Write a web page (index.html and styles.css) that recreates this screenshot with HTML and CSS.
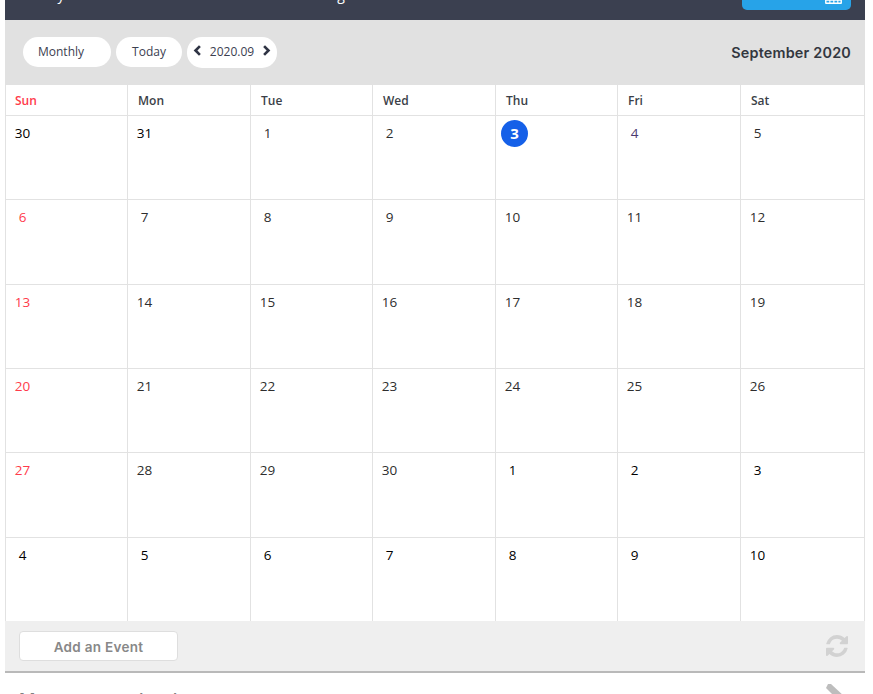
FILE: index.html
```
<!DOCTYPE html>
<html lang="en">
<head>
<meta charset="utf-8">
<title>Calendar</title>
<link rel="stylesheet" href="styles.css">
</head>
<body>
<div class="page">
  <header class="topbar">
    <span class="nav-a">Weekly</span>
    <span class="nav-b">Manage</span>
    <span class="cal-btn">
      <svg class="cal-icon" viewBox="0 0 18 16" aria-hidden="true"><path d="M1 0h16a1 1 0 0 1 1 1v14a1 1 0 0 1-1 1H1a1 1 0 0 1-1-1V1a1 1 0 0 1 1-1zm.5 5v2.500h3V5zm4.200 0v2.500h3V5zm4.300 0v2.500h3V5zm4.200 0v2.500h2.300V5zM1.500 8.800v2.500h3V8.800zm4.200 0v2.500h3V8.800zm4.300 0v2.500h3V8.800zm4.200 0v2.500h2.300V8.800zM1.500 12.500v2h3v-2zm4.200 0v2h3v-2zm4.300 0v2h3v-2zm4.200 0v2h2.300v-2z" fill="#fff" fill-rule="evenodd"/></svg>
    </span>
  </header>

  <section class="toolbar">
    <div class="controls">
      <span class="pill pill-month">Monthly</span>
      <span class="pill pill-today">Today</span>
      <span class="pill pill-nav">
        <svg class="chev" viewBox="0 0 8 10" aria-hidden="true"><path d="M6.200 1 2.200 5l4 4" fill="none" stroke="#2f3444" stroke-width="2.400"/></svg>
        <span>2020.09</span>
        <svg class="chev" viewBox="0 0 8 10" aria-hidden="true"><path d="M1.800 1l4 4-4 4" fill="none" stroke="#2f3444" stroke-width="2.400"/></svg>
      </span>
    </div>
    <h1 class="title">September 2020</h1>
  </section>

  <section class="cal">
    <div class="head sun">Sun</div><div class="head">Mon</div><div class="head">Tue</div><div class="head">Wed</div><div class="head">Thu</div><div class="head">Fri</div><div class="head">Sat</div>

    <div class="cell"><span class="num other">30</span></div><div class="cell"><span class="num other">31</span></div><div class="cell"><span class="num">1</span></div><div class="cell"><span class="num">2</span></div><div class="cell"><span class="num today">3</span></div><div class="cell"><span class="num fri">4</span></div><div class="cell"><span class="num">5</span></div>

    <div class="cell"><span class="num red">6</span></div><div class="cell"><span class="num">7</span></div><div class="cell"><span class="num">8</span></div><div class="cell"><span class="num">9</span></div><div class="cell"><span class="num">10</span></div><div class="cell"><span class="num">11</span></div><div class="cell"><span class="num">12</span></div>

    <div class="cell"><span class="num red">13</span></div><div class="cell"><span class="num">14</span></div><div class="cell"><span class="num">15</span></div><div class="cell"><span class="num">16</span></div><div class="cell"><span class="num">17</span></div><div class="cell"><span class="num">18</span></div><div class="cell"><span class="num">19</span></div>

    <div class="cell"><span class="num red">20</span></div><div class="cell"><span class="num">21</span></div><div class="cell"><span class="num">22</span></div><div class="cell"><span class="num">23</span></div><div class="cell"><span class="num">24</span></div><div class="cell"><span class="num">25</span></div><div class="cell"><span class="num">26</span></div>

    <div class="cell"><span class="num red">27</span></div><div class="cell"><span class="num">28</span></div><div class="cell"><span class="num">29</span></div><div class="cell"><span class="num">30</span></div><div class="cell"><span class="num other">1</span></div><div class="cell"><span class="num other">2</span></div><div class="cell"><span class="num other">3</span></div>

    <div class="cell"><span class="num other">4</span></div><div class="cell"><span class="num other">5</span></div><div class="cell"><span class="num other">6</span></div><div class="cell"><span class="num other">7</span></div><div class="cell"><span class="num other">8</span></div><div class="cell"><span class="num other">9</span></div><div class="cell"><span class="num other">10</span></div>
  </section>

  <footer class="actions">
    <span class="add-btn">Add an Event</span>
    <svg class="refresh" viewBox="128 128 1536 1536" aria-hidden="true"><path fill="#d2d2d2" d="M1639 1056q0 5-1 7-64 268-268 434.500t-478 166.500q-146 0-282.500-55t-243.500-157l-129 129q-19 19-45 19t-45-19-19-45v-448q0-26 19-45t45-19h448q26 0 45 19t19 45-19 45l-137 137q71 66 161 102t187 36q134 0 250-65t186-179q11-17 53-117 8-23 30-23h192q13 0 22.500 9.500t9.500 22.500zm25-800v448q0 26-19 45t-45 19h-448q-26 0-45-19t-19-45 19-45l138-138q-148-137-349-137-134 0-250 65t-186 179q-11 17-53 117-8 23-30 23h-199q-13 0-22.500-9.500t-9.500-22.500v-7q65-268 270-434.500t480-166.500q146 0 284 55.500t245 156.500l130-129q19-19 45-19t45 19 19 45z"/></svg>
  </footer>

  <section class="memo">
    <h2 class="memo-title">Memos on calendar</h2>
    <svg class="pen" viewBox="0 0 20 20" aria-hidden="true"><path d="M3 0 6 0 20 13v7h-3L1 4z" fill="#bdbdbd"/></svg>
  </section>
</div>
</body>
</html>
```

FILE: styles.css
```
* { box-sizing: border-box; }
html, body { margin: 0; height: 100%; overflow: hidden; background: #fff; }
body { font-family: "Open Sans", "Liberation Sans", sans-serif; color: #333; }

.page { width: 860px; margin-left: 5px; height: 694px; overflow: hidden; }

.topbar {
  height: 20px;
  background: #3b4050;
  display: flex;
  align-items: flex-end;
  overflow: hidden;
  color: #fff;
  font-size: 14px;
  line-height: 20px;
  position: relative;
}
.nav-a { margin-left: 13px; margin-bottom: 15px; }
.nav-b { margin-left: 236px; margin-bottom: 15px; }
.cal-btn {
  margin-left: auto;
  margin-right: 14px;
  margin-bottom: 10px;
  width: 109px;
  height: 36px;
  background: #27a3e8;
  border-radius: 0 0 5px 5px;
  display: flex;
  align-items: flex-end;
  justify-content: flex-end;
  padding: 0 9px 6px 0;
}
.cal-icon { width: 17px; height: 15px; display: block; }

.toolbar {
  height: 65px;
  background: #e1e1e1;
  display: flex;
  align-items: center;
  justify-content: space-between;
  padding: 0 14px 0 18px;
}
.controls { display: flex; gap: 5px; align-items: flex-start; }
.pill {
  height: 30px;
  background: #fff;
  border-radius: 15px;
  font-size: 12px;
  line-height: 30px;
  color: #3b4050;
  display: flex;
  align-items: center;
}
.pill-month { width: 88px; padding-left: 15px; }
.pill-today { width: 66px; justify-content: center; }
.pill-nav { width: 90px; height: 31px; justify-content: space-between; padding: 0 6px 1px 6px; gap: 0; }
.chev { width: 9px; height: 11px; display: block; margin-top: -3px; }
.title {
  margin: 0;
  font-family: Inter, "Liberation Sans", sans-serif;
  font-size: 14.400px;
  font-weight: 600;
  letter-spacing: 0.2px;
  color: #33373f;
}

.cal {
  display: grid;
  grid-template-columns: 122px 123px 122px 123px 122px 123px 124px;
  grid-template-rows: 31px repeat(6, 84.330px);
  background: #fff;
  border-right: 1px solid #e2e2e2;
}
.head {
  border-left: 1px solid #e2e2e2;
  border-bottom: 1px solid #e2e2e2;
  font-size: 12px;
  font-weight: 600;
  line-height: 32px;
  padding-left: 10px;
  color: #3b3f48;
}
.head.sun { color: #ff3b4b; padding-left: 9px; }
.cell {
  border-left: 1px solid #e2e2e2;
  border-bottom: 1px solid #e2e2e2;
  padding: 4px 0 0 3px;
}
.num {
  display: block;
  width: 27px;
  height: 27px;
  line-height: 27px;
  text-align: center;
  font-size: 13.500px;
  color: #2e2e2e;
}
.num.other { color: #000; }
.num.red { color: #ff3b4b; }
.num.fri { color: #4a3a70; }
.num.today {
  margin-left: 2px;
  border-radius: 50%;
  background: #1560e8;
  color: #fff;
  font-weight: 700;
  font-size: 15px;
}

.actions {
  height: 52px;
  margin-top: -1px;
  background: #efefef;
  border-bottom: 2px solid #b9b9b9;
  display: flex;
  align-items: center;
  justify-content: space-between;
  padding: 0 17px 0 14px;
  position: relative;
}
.add-btn {
  width: 159px;
  height: 30px;
  background: #fff;
  border: 1px solid #dedede;
  border-radius: 4px;
  text-align: center;
  font-family: Inter, "Liberation Sans", sans-serif;
  font-size: 13.500px;
  font-weight: 600;
  letter-spacing: 0.3px;
  line-height: 30px;
  color: #888;
}
.refresh { width: 22px; height: 22px; display: block; }

.memo {
  display: flex;
  justify-content: space-between;
  align-items: flex-start;
  padding: 11px 20px 0 14px;
}
.memo-title {
  margin: 5px 0 0;
  font-family: Inter, "Liberation Sans", sans-serif;
  font-size: 18px;
  font-weight: 500;
  letter-spacing: 0.4px;
  line-height: 24px;
  color: #808080;
}
.pen { width: 20px; height: 20px; display: block; }
```
